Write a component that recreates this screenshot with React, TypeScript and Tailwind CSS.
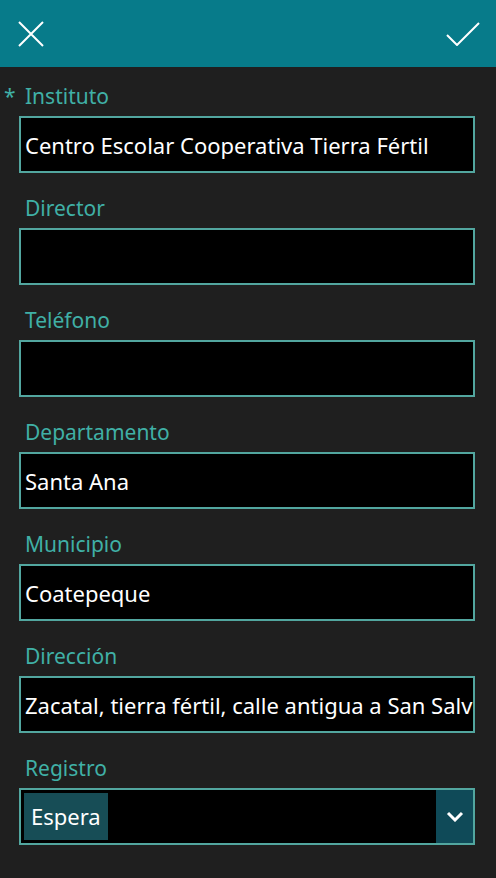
import { useState } from "react";

type Field = { label: string; value: string; required?: boolean };

const FIELDS: Field[] = [
  { label: "Instituto", value: "Centro Escolar Cooperativa Tierra Fértil", required: true },
  { label: "Director", value: "" },
  { label: "Teléfono", value: "" },
  { label: "Departamento", value: "Santa Ana" },
  { label: "Municipio", value: "Coatepeque" },
  { label: "Dirección", value: "Zacatal, tierra fértil, calle antigua a San Salvador" },
];

function FieldLabel({ label, required }: { label: string; required?: boolean }) {
  return (
    <div className="relative h-[28px] pl-[25px] text-[21px] leading-[28px] text-[#40b0a6]">
      {required && <span className="absolute left-[4px] top-0">*</span>}
      {label}
    </div>
  );
}

function TextField({ field }: { field: Field }) {
  const [value, setValue] = useState(field.value);
  return (
    <div className="flex flex-col gap-[6px]">
      <FieldLabel label={field.label} required={field.required} />
      <div className="ml-[19px] mr-[21px] h-[57px] border-2 border-[#52a69f] bg-black">
        <input
          value={value}
          onChange={(e) => setValue(e.target.value)}
          className="h-full w-full bg-transparent pl-[4px] text-[22px] text-white outline-none"
        />
      </div>
    </div>
  );
}

export default function App() {
  return (
    <div
      className="flex h-[878px] w-[496px] flex-col bg-[#1f1f1f]"
      style={{ fontFamily: '"Noto Sans", "Open Sans", sans-serif' }}
    >
      <header className="flex h-[67px] shrink-0 items-center justify-between bg-[#077b8a] pl-[18px] pr-[16px]">
        <svg width="26" height="26" viewBox="0 0 26 26" fill="none" stroke="white" strokeWidth="2">
          <path d="M1 1 L25 25 M25 1 L1 25" />
        </svg>
        <svg width="34" height="24" viewBox="0 0 34 24" fill="none" stroke="white" strokeWidth="2">
          <path d="M1 13 L11 23 L33 1" />
        </svg>
      </header>

      <div className="flex flex-col gap-[21px] pt-[15px]">
        {FIELDS.map((f) => (
          <TextField key={f.label} field={f} />
        ))}

        <div className="flex flex-col gap-[6px]">
          <FieldLabel label="Registro" />
          <div className="ml-[19px] mr-[21px] flex h-[57px] items-stretch border-2 border-[#52a69f] bg-black">
            <div className="flex flex-1 items-center pl-[3px]">
              <span className="flex h-[47px] items-center bg-[#174d56] px-[7px] text-[22px] text-white">
                Espera
              </span>
            </div>
            <div className="flex w-[37px] items-center justify-center bg-[#0f4a58]">
              <svg width="18" height="11" viewBox="0 0 18 11" fill="none" stroke="white" strokeWidth="3">
                <path d="M2 2 L9 9 L16 2" />
              </svg>
            </div>
          </div>
        </div>
      </div>
    </div>
  );
}
